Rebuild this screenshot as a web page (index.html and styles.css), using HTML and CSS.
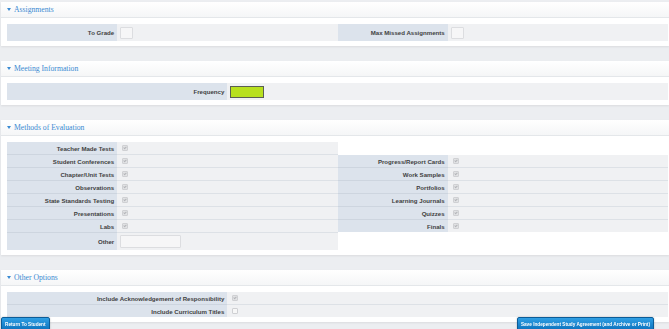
FILE: index.html
```html
<!DOCTYPE html>
<html lang="en">
<head>
    <meta charset="UTF-8">
    <meta name="viewport" content="width=device-width, initial-scale=1.0">
    <title>Independent Study Agreement</title>
    <link rel="stylesheet" href="styles.css">
</head>
<body>
    <div class="page">
        <section class="panel">
            <div class="panel-head"><span class="caret"></span>Assignments</div>
            <div class="panel-body">
                <div class="kv quad">
                    <div class="lbl tall">To Grade</div>
                    <div class="val tall"><span class="box"></span></div>
                    <div class="lbl tall">Max Missed Assignments</div>
                    <div class="val tall"><span class="box"></span></div>
                </div>
            </div>
        </section>

        <section class="panel">
            <div class="panel-head"><span class="caret"></span>Meeting Information</div>
            <div class="panel-body">
                <div class="kv wide">
                    <div class="lbl tall">Frequency</div>
                    <div class="val tall"><span class="swatch"></span></div>
                </div>
            </div>
        </section>

        <section class="panel">
            <div class="panel-head"><span class="caret"></span>Methods of Evaluation</div>
            <div class="panel-body">
                <div class="cols">
                    <div class="kv">
                        <div class="lbl">Teacher Made Tests</div><div class="val"><span class="cb on"></span></div>
                        <div class="lbl">Student Conferences</div><div class="val"><span class="cb on"></span></div>
                        <div class="lbl">Chapter/Unit Tests</div><div class="val"><span class="cb on"></span></div>
                        <div class="lbl">Observations</div><div class="val"><span class="cb on"></span></div>
                        <div class="lbl">State Standards Testing</div><div class="val"><span class="cb on"></span></div>
                        <div class="lbl">Presentations</div><div class="val"><span class="cb on"></span></div>
                        <div class="lbl">Labs</div><div class="val"><span class="cb on"></span></div>
                        <div class="lbl tall last">Other</div><div class="val tall last"><span class="text-in"></span></div>
                    </div>
                    <div class="kv offset">
                        <div class="lbl">Progress/Report Cards</div><div class="val"><span class="cb on"></span></div>
                        <div class="lbl">Work Samples</div><div class="val"><span class="cb on"></span></div>
                        <div class="lbl">Portfolios</div><div class="val"><span class="cb on"></span></div>
                        <div class="lbl">Learning Journals</div><div class="val"><span class="cb on"></span></div>
                        <div class="lbl">Quizzes</div><div class="val"><span class="cb on"></span></div>
                        <div class="lbl last">Finals</div><div class="val last"><span class="cb on"></span></div>
                    </div>
                </div>
            </div>
        </section>

        <section class="panel">
            <div class="panel-head"><span class="caret"></span>Other Options</div>
            <div class="panel-body">
                <div class="kv wide">
                    <div class="lbl">Include Acknowledgement of Responsibility</div><div class="val"><span class="cb on"></span></div>
                    <div class="lbl last">Include Curriculum Titles</div><div class="val last"><span class="cb"></span></div>
                </div>
            </div>
        </section>
    </div>

    <div class="actions">
        <button class="btn">Return To Student</button>
        <button class="btn">Save Independent Study Agreement (and Archive or Print)</button>
    </div>
</body>
</html>
```

FILE: styles.css
```css
body {
    margin: 0;
    background-color: #eceef1;
    font-family: "Liberation Sans", Arial, sans-serif;
    overflow: hidden;
}
.page {
    padding-top: 2px;
}
.panel {
    margin: 0 0 15px 1px;
    background-color: white;
    box-shadow: 0 1px 2px rgba(0,0,0,0.08);
}
.panel-head {
    height: 15px;
    display: flex;
    align-items: center;
    padding-left: 6px;
    background: linear-gradient(#ffffff, #f5f6f7);
    border-bottom: 1px solid #e4e7ea;
    font-family: "Liberation Serif", "Times New Roman", serif;
    font-size: 7.7px;
    color: #3a8ad2;
}
.caret {
    width: 0;
    height: 0;
    border-left: 2.5px solid transparent;
    border-right: 2.5px solid transparent;
    border-top: 3px solid #3a8ad2;
    margin-right: 3px;
}
.panel-body {
    padding: 6px 1px 5px 6px;
}
.kv {
    display: grid;
    grid-template-columns: 1fr 2fr;
}
.kv.quad {
    grid-template-columns: 1fr 2fr 1fr 2fr;
}
.kv.wide {
    grid-template-columns: 1fr 2fr;
}
.cols {
    display: grid;
    grid-template-columns: 1fr 1fr;
    align-items: start;
}
.kv.offset {
    margin-top: 13px;
}
.lbl, .val {
    height: 12px;
    display: flex;
    align-items: center;
    border-bottom: 1px solid #cdd5df;
}
.lbl {
    justify-content: flex-end;
    padding-right: 3px;
    background-color: #dce3ec;
    font-size: 6.1px;
    font-weight: bold;
    color: #3f3f3f;
    white-space: nowrap;
}
.val {
    padding-left: 3px;
    background-color: #f0f1f3;
    border-bottom-color: #dde1e6;
}
.lbl.last, .val.last {
    border-bottom: none;
}
.lbl.tall, .val.tall {
    height: 17px;
    border-bottom: none;
}
.box {
    width: 11px;
    height: 10px;
    background-color: #f6f6f7;
    border: 1px solid #dcdde0;
    border-radius: 1px;
}
.swatch {
    width: 32px;
    height: 10px;
    background-color: #b8e01e;
    border: 1px solid #5a5f52;
}
.text-in {
    width: 59px;
    height: 11px;
    background-color: #f6f6f7;
    border: 1px solid #dcdde0;
    border-radius: 1px;
}
.cb {
    position: relative;
    width: 4px;
    height: 4px;
    margin-left: 2px;
    background-color: #f7f7f7;
    border: 1px solid #cfd0d3;
    border-radius: 1px;
}
.cb.on {
    background-color: #e1e2e4;
}
.cb.on::after {
    content: "";
    position: absolute;
    left: 1px;
    top: 0;
    width: 1px;
    height: 2px;
    border-right: 1px solid #b3b5b9;
    border-bottom: 1px solid #b3b5b9;
    transform: rotate(45deg);
}
.actions {
    position: fixed;
    left: 1px;
    right: 15px;
    top: 317px;
    display: flex;
    justify-content: space-between;
}
.btn {
    height: 14px;
    padding: 0 3px;
    border: 1px solid #0b5c98;
    border-radius: 2px;
    background: linear-gradient(#2f9fe4, #0c72bd);
    color: white;
    font-family: "Liberation Sans", Arial, sans-serif;
    font-size: 4.7px;
    font-weight: bold;
    box-shadow: 0 0 2px rgba(0,0,0,0.25);
}
```
